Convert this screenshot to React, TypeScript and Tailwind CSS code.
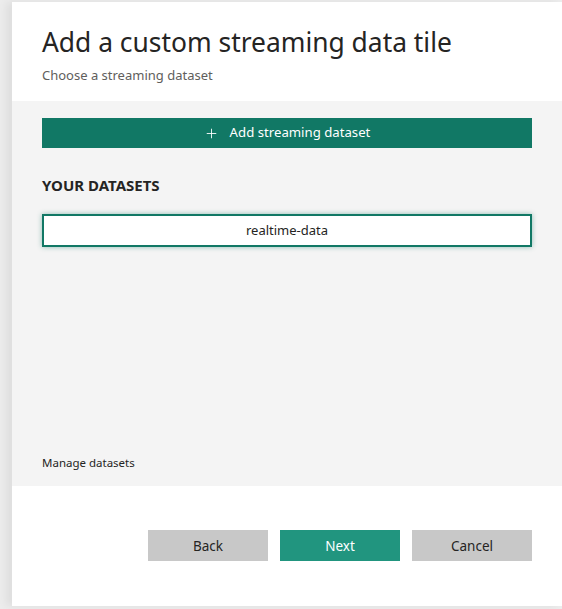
import { Plus } from 'lucide-react';

export default function App() {
  return (
    <div className="h-[609px] w-[562px] bg-[#ececec] pt-[2px] pb-[3px] pl-[12px] font-['Noto_Sans',sans-serif] text-[#252423]">
      <div className="flex h-full flex-col bg-white shadow-[-6px_0_8px_rgba(0,0,0,0.06)]">
        <div className="h-[99px] px-[30px] pt-[22px]">
          <h1 className="text-[26.4px] leading-[36px] text-[#252423]">Add a custom streaming data tile</h1>
          <p className="mt-[7px] text-[13px] leading-[16px] text-[#605e5c]">Choose a streaming dataset</p>
        </div>

        <div className="flex h-[385px] flex-col bg-[#f4f4f4] px-[30px] pt-[17px]">
          <button className="flex h-[30px] w-full items-center justify-center gap-[11px] bg-[#117865] text-[13.2px] text-white">
            <Plus size={15} strokeWidth={1.4} />
            Add streaming dataset
          </button>
          <h2 className="mt-[27px] text-[15px] font-bold leading-[20px] text-[#252423]">YOUR DATASETS</h2>
          <div className="mt-[19px] flex h-[33px] items-center justify-center border-2 border-[#117865] bg-white text-[13px] shadow-[0_0_5px_rgba(17,120,101,0.45)]">
            realtime-data
          </div>
          <div className="flex-1" />
          <a className="mb-[15px] text-[11.5px] leading-[16px] text-[#252423]">Manage datasets</a>
        </div>

        <div className="flex flex-1 items-start justify-end gap-[12px] pr-[30px] pt-[44px]">
          <button className="h-[31px] w-[120px] bg-[#c8c8c8] pt-[1px] text-[13.5px] text-[#252423]">Back</button>
          <button className="h-[31px] w-[120px] bg-[#21957f] pt-[1px] text-[13.5px] text-white">Next</button>
          <button className="h-[31px] w-[120px] bg-[#c8c8c8] pt-[1px] text-[13.5px] text-[#252423]">Cancel</button>
        </div>
      </div>
    </div>
  );
}
